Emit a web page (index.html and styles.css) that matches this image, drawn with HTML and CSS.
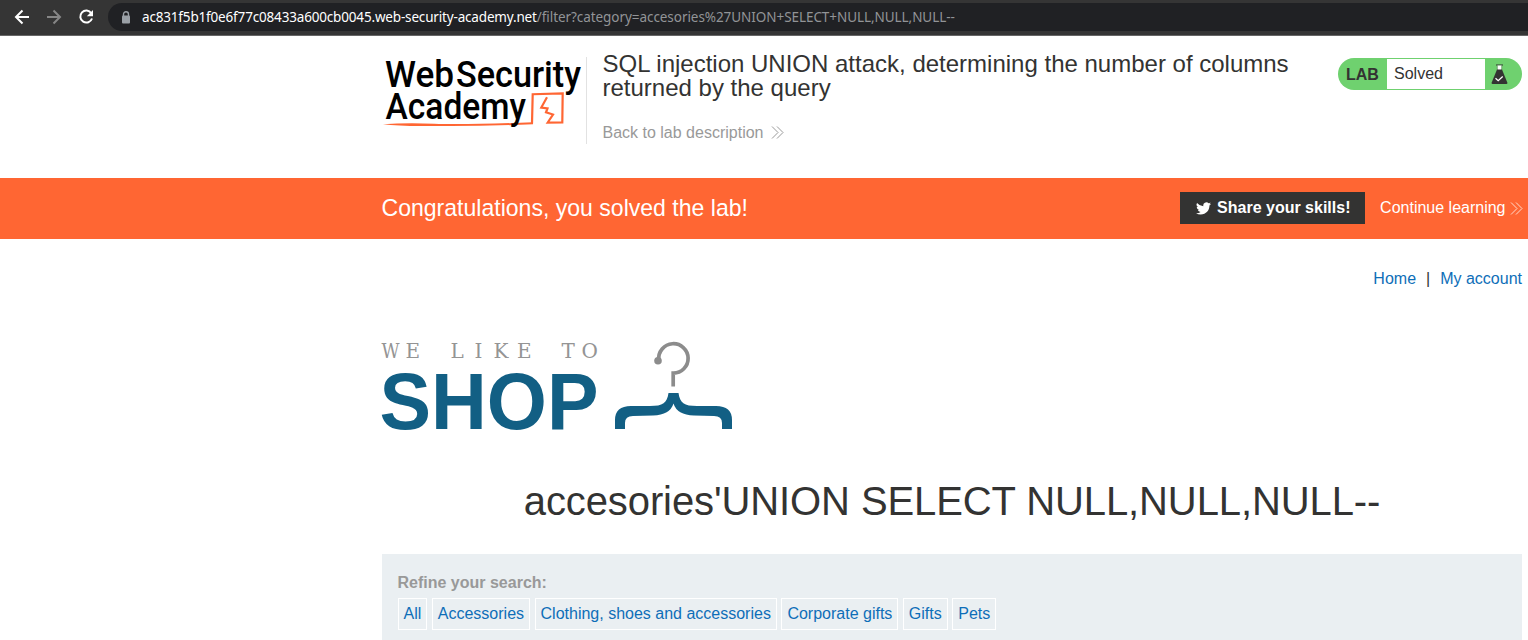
FILE: index.html
```html
<!DOCTYPE html>
<html lang="en">
<head>
<meta charset="utf-8">
<title>SQL injection UNION attack</title>
<link rel="stylesheet" href="styles.css">
</head>
<body>
<div class="browser">
  <svg class="nav-icons" width="108" height="36" viewBox="0 0 108 36" fill="none" stroke-width="2">
    <path d="M29 17H16.500M22.500 10.500L16 17l6.500 6.500" stroke="#fff"/>
    <path d="M47 17h12.500M53.500 10.500L60 17l-6.500 6.500" stroke="#868686"/>
    <path d="M91.300 13.200A6 6 0 1 0 92 18.500" stroke="#fff"/>
    <path d="M93 10v6.200h-6.200z" fill="#fff"/>
  </svg>
  <div class="address">
    <svg class="lock" width="10" height="13" viewBox="0 0 10 13"><path d="M2.500 5V3.200a2.500 2.500 0 0 1 5 0V5" fill="none" stroke="#9aa0a6" stroke-width="1.400"/><rect x="1" y="4.500" width="8" height="8" rx="1" fill="#9aa0a6"/></svg>
    <span class="host">ac831f5b1f0e6f77c08433a600cb0045.web-security-academy.net</span><span class="path">/filter?category=accesories%27UNION+SELECT+NULL,NULL,NULL--</span>
  </div>
</div>
<header class="header">
  <svg class="academy-logo" width="204" height="88" viewBox="382 56 204 88">
    <path d="M383 124.300Q405 122.500 434 123.700T533 122.300L533 124.200Q480 126.500 434 126Q400 126.500 383 124.300z" fill="#f63"/>
    <path d="M532 123.500L532.700 94.200L562.700 93.300L562.300 122.300L547.700 122.500L553 114.500L546 112.300L547.500 108.300L541.300 107.500L547 97.300" fill="none" stroke="#f63" stroke-width="2.200"/>
    <g class="academy-text"><text x="385" y="86.500" textLength="69" lengthAdjust="spacingAndGlyphs">Web</text><text x="456" y="86.500" textLength="125" lengthAdjust="spacingAndGlyphs">Security</text><text x="385.500" y="118.500" textLength="140.500" lengthAdjust="spacingAndGlyphs">Academy</text></g>
  </svg>
  <div class="title-box">
    <h2>SQL injection UNION attack, determining the number of columns returned by the query</h2>
    <a class="back">Back to lab description<svg width="13" height="13" viewBox="0 0 13 13" fill="none" stroke="#999"><path d="M1 .5l6 6-6 6M6 .5l6 6-6 6"/></svg></a>
  </div>
  <div class="lab">
    <span class="lab-name">LAB</span><span class="lab-status">Solved</span>
    <svg class="flask" width="17" height="21" viewBox="0 0 17 21"><path d="M5 1h7" stroke="#333332"/><path d="M6.500 1.500h4V6h-4z" fill="#fff"/><path d="M6.200 1.500V6M10.800 1.500V6" stroke="#6f8f6d" stroke-width=".7"/><path d="M6 5.500h5l5.300 13q.5 1.500-1 1.500H1.700q-1.500 0-1-1.500z" fill="#333332"/><path d="M4.500 14.300l2.700 2.400 4.500-4.200" stroke="#fff" stroke-width="1.300" fill="none"/></svg>
  </div>
</header>
<section class="banner">
  <p>Congratulations, you solved the lab!</p>
  <a class="share"><svg width="15" height="13" viewBox="0 0 24 20"><path fill="#fff" d="M24 2.400a9.800 9.800 0 0 1-2.800.8A4.900 4.900 0 0 0 23.300.5a9.900 9.900 0 0 1-3.100 1.200 4.900 4.900 0 0 0-8.400 4.500A14 14 0 0 1 1.700 1a4.900 4.900 0 0 0 1.500 6.600A4.900 4.900 0 0 1 1 7v.1a4.900 4.900 0 0 0 3.900 4.800 5 5 0 0 1-2.200.1 4.900 4.900 0 0 0 4.600 3.400A9.900 9.900 0 0 1 0 17.500a14 14 0 0 0 7.500 2.200c9.100 0 14.400-7.700 14-14.700A10 10 0 0 0 24 2.400z"/></svg>Share your skills!</a>
  <a class="continue">Continue learning<svg width="13" height="13" viewBox="0 0 13 13" fill="none" stroke="#ffd9cb"><path d="M1 .5l6 6-6 6M6 .5l6 6-6 6"/></svg></a>
</section>
<main class="shop">
  <nav class="links"><a>Home</a><span>|</span><a>My account</a></nav>
  <svg class="shop-logo" width="354" height="104" viewBox="380 334 354 104">
    <text class="like" y="357.500" x="381.500 405.500 432 450.500 474.500 493.500 517 540 561.500 581.500"><tspan class="narrow">W</tspan>E LIKE TO</text>
    <text class="shop-word" x="379.500" y="429" textLength="219" lengthAdjust="spacingAndGlyphs">SHOP</text>
    <path d="M658.800 360A14.700 14.700 0 1 1 673.200 373.100V386.500" fill="none" stroke="#8c8c8c" stroke-width="3.700"/>
    <circle cx="658" cy="360.700" r="3.800" fill="#8c8c8c"/>
    <path d="M668.500 393H678.500C680 403 684 406 697 406H716Q732 406 732 420V429H722V423Q722 416 714 416L694 415.500Q677 415 673.500 403.500Q670 415 653 415.500L633 416Q625 416 625 423V429H615V420Q615 406 631 406H650C663 406 667 403 668.500 393z" fill="#125f84"/>
  </svg>
  <h1>accesories'UNION SELECT NULL,NULL,NULL--</h1>
  <section class="search">
    <label>Refine your search:</label>
    <div class="filters"><a>All</a><a>Accessories</a><a>Clothing, shoes and accessories</a><a>Corporate gifts</a><a>Gifts</a><a>Pets</a></div>
  </section>
</main>
</body>
</html>
```
FILE: styles.css
```css
* { box-sizing: border-box; }
body { margin: 0; height: 640px; overflow: hidden; background: #fff; color: #333332; font: 16px/20px "Liberation Sans", Arial, sans-serif; }
svg { display: block; flex: none; }
h1, h2, p { margin: 0; font-weight: 400; }
.browser { display: flex; height: 36px; background: #353535; border-bottom: 1px solid #666; }
.address { flex: 1; display: flex; align-items: center; height: 28px; margin-top: 3px; padding-left: 13px; border-radius: 14px 0 0 14px; background: #202124; font: 13.5px/28px "Noto Sans", "Open Sans", sans-serif; white-space: nowrap; }
.lock { margin-right: 11px; }
.host { color: #fff; letter-spacing: -0.17px; }
.path { color: #929497; letter-spacing: -0.06px; }
.header { display: flex; height: 142px; padding: 20px 6px 0 382px; }
.academy-logo { overflow: visible; }
.academy-text { font: 500 37px Roboto, sans-serif; }
.title-box { width: 735px; height: 87px; padding-left: 15.5px; border-left: 1px solid #e2e2e2; margin-top: 1px; }
h2 { width: 700px; margin-top: -5px; font-size: 24px; line-height: 24px; }
.back { display: flex; align-items: center; gap: 8px; margin-top: 23px; line-height: 20px; color: #999; }
.back svg { margin-top: -1px; }
.lab { display: flex; width: 184px; height: 32px; margin: 2px 0 0 auto; padding: 1px 0; border-radius: 16px; background: #6fd16f; line-height: 30px; }
.lab-name { width: 49px; padding-left: 8px; font-weight: 700; line-height: 31px; }
.lab-status { width: 98px; padding-left: 7px; background: #fff; }
.flask { margin: 5px 0 0 6px; }
.banner { display: flex; align-items: center; height: 61px; padding: 0 5.5px 1px 381.5px; background: #f63; color: #fff; }
.banner p { font-size: 23.05px; line-height: 30px; }
.share { display: flex; align-items: center; gap: 6px; width: 185px; height: 32px; margin: 0 15px 0 auto; padding-left: 16px; background: #333332; font-weight: 700; }
.continue { display: flex; align-items: center; gap: 4px; }
.shop { padding: 30px 6px 0 382px; }
.links { display: flex; justify-content: flex-end; gap: 10px; height: 20px; }
.links a, .filters a { color: #0e6eb8; }
.shop-logo { margin: 45px 0 0 -2px; }
.like { font: 20px "DejaVu Serif", serif; fill: #949494; }
.narrow { font-family: "DejaVu Serif Condensed", "DejaVu Serif", serif; font-size: 19.5px; font-stretch: condensed; }
.shop-word { font: 700 80px "Liberation Sans", sans-serif; fill: #125f84; }
h1 { margin-top: 39px; font-size: 40px; line-height: 48px; letter-spacing: -0.1px; text-align: center; }
.search { height: 90px; margin-top: 29px; padding: 19px 15.5px; background: #eaeff2; }
.search label { display: block; font-weight: 700; color: #999; }
.filters { display: flex; gap: 4.5px; margin-top: 5px; }
.filters a { height: 32px; padding: 5px; border: 1px solid #fff; white-space: nowrap; }
```
